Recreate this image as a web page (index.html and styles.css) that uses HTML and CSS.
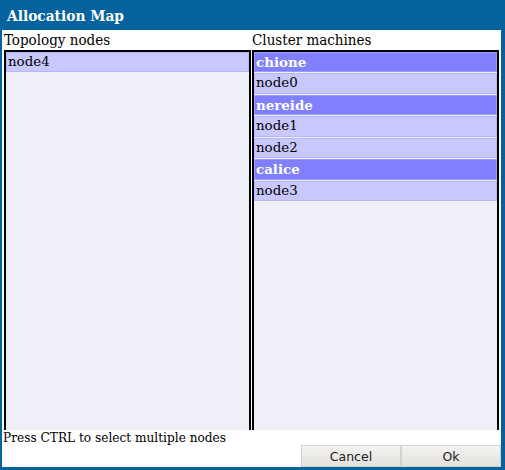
FILE: index.html
```html
<!DOCTYPE html>
<html>
<head>
<meta charset="utf-8">
<link rel="stylesheet" href="styles.css">
</head>
<body>
<div class="window">
  <div class="title">Allocation Map</div>
  <div class="content">
    <div class="panes">
      <div class="pane pane-left">
        <div class="label">Topology nodes</div>
        <div class="list">
          <div class="item">node4</div>
        </div>
      </div>
      <div class="pane pane-right">
        <div class="label">Cluster machines</div>
        <div class="list">
          <div class="item head">chione</div>
          <div class="item">node0</div>
          <div class="item head">nereide</div>
          <div class="item">node1</div>
          <div class="item">node2</div>
          <div class="item head">calice</div>
          <div class="item">node3</div>
        </div>
      </div>
    </div>
    <div class="hint">Press CTRL to select multiple nodes</div>
    <div class="buttons">
      <button class="btn">Cancel</button>
      <button class="btn">Ok</button>
    </div>
  </div>
</div>
</body>
</html>
```
FILE: styles.css
```css
html, body {
  margin: 0;
  padding: 0;
  width: 505px;
  height: 470px;
  overflow: hidden;
}

.window {
  width: 505px;
  height: 470px;
  box-sizing: border-box;
  background: #04629f;
  padding: 0 4px 3px 2px;
  display: flex;
  flex-direction: column;
}

.title {
  height: 30px;
  box-sizing: border-box;
  padding: 2px 0 0 5px;
  line-height: 28px;
  color: #ffffff;
  font-family: "DejaVu Serif Condensed", "DejaVu Serif", serif;
  font-stretch: condensed;
  font-weight: bold;
  font-size: 15.3px;
}

.content {
  flex: 1;
  background: #ffffff;
  display: flex;
  flex-direction: column;
  min-height: 0;
}

.panes {
  height: 400px;
  display: flex;
  gap: 1px;
  padding-left: 2px;
  overflow: hidden;
}

.pane {
  width: 247px;
  display: flex;
  flex-direction: column;
}

.label {
  height: 20px;
  line-height: 20px;
  font-family: "DejaVu Serif Condensed", "DejaVu Serif", serif;
  font-stretch: condensed;
  font-size: 15px;
  color: #000;
  white-space: nowrap;
}

.list {
  flex: 1;
  border: 2px solid #000;
  border-bottom: none;
  background: #efeff8;
  display: flex;
  flex-direction: column;
  gap: 1px;
  padding-top: 0;
}

.item {
  height: 20.43px;
  line-height: 20.43px;
  padding-left: 2px;
  background: #c8c8ff;
  box-shadow: inset 0 0 0 1px #b6b6ff;
  font-family: "DejaVu Serif", serif;
  font-size: 13.4px;
  color: #000;
  white-space: nowrap;
}

.item.head {
  background: #8080ff;
  box-shadow: inset 0 0 0 1px #9a9aff;
  color: #ffffff;
  font-weight: bold;
}

.hint {
  height: 15px;
  line-height: 15px;
  padding-left: 1px;
  font-family: "DejaVu Serif Condensed", "DejaVu Serif", serif;
  font-stretch: condensed;
  font-size: 13.5px;
  color: #000;
  white-space: nowrap;
}

.buttons {
  flex: 1;
  display: flex;
  justify-content: flex-end;
}

.btn {
  width: 100px;
  height: 22px;
  margin: 0;
  padding: 0;
  border: 1px solid #d2d2d0;
  background: linear-gradient(#f4f3f1, #e3e1dc);
  font-family: "DejaVu Sans", sans-serif;
  font-size: 12.5px;
  color: #222;
}
```
